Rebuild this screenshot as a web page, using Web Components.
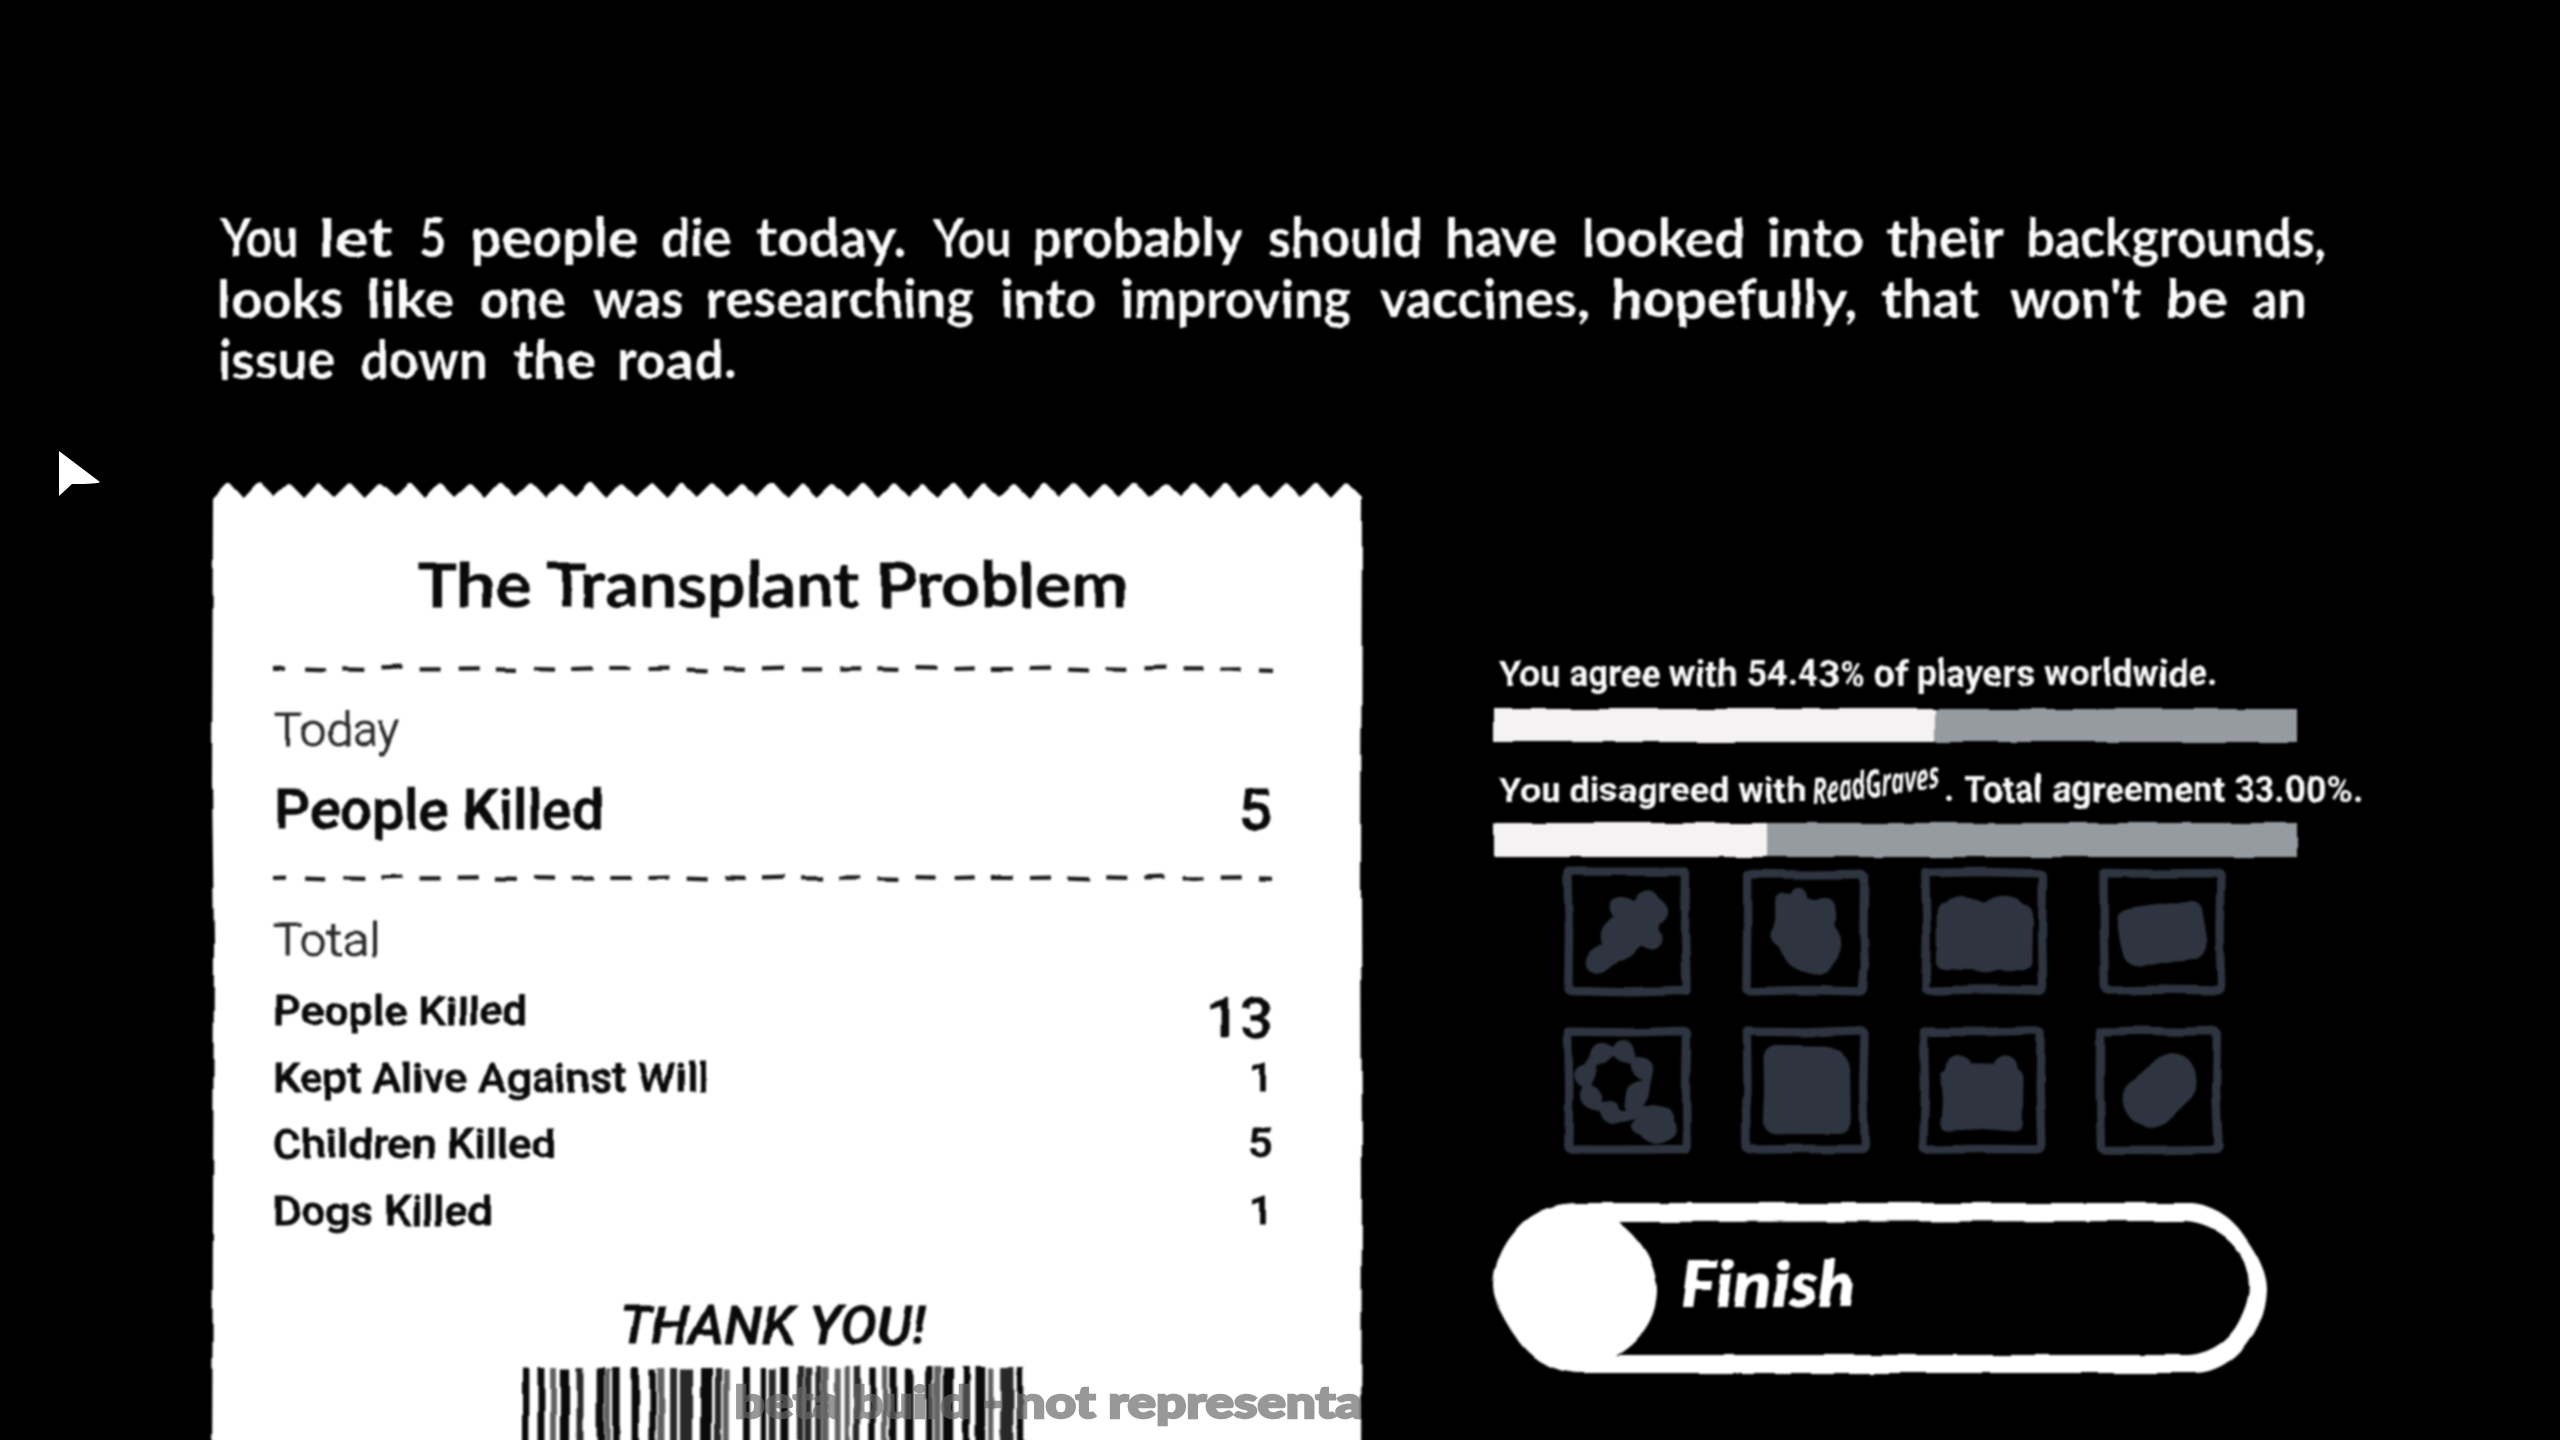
<!DOCTYPE html>
<html lang="en">
<head>
<meta charset="utf-8">
<title>The Transplant Problem</title>
<style>
html,body{margin:0;background:#000;width:2560px;height:1440px;overflow:hidden}
</style>
</head>
<body>
<game-stage></game-stage>
<script>
const WOBBLE = `<svg width="0" height="0" style="position:absolute"><filter id="wob" x="-2%" y="-5%" width="104%" height="110%" color-interpolation-filters="sRGB">
<feTurbulence type="fractalNoise" baseFrequency="0.03" numOctaves="1" seed="7" result="n"/>
<feColorMatrix in="n" type="matrix" values="1 0 0 0 0  0 1 0 0 0  0 0 1 0 0  0 0 0 0 1" result="m"/>
<feDisplacementMap in="SourceGraphic" in2="m" scale="5" xChannelSelector="R" yChannelSelector="G"/><feGaussianBlur stdDeviation="0.8"/></filter></svg>`;

/* One line of text whose ink spans exactly `w` pixels.
   `spans` optionally gives each word its own ink start and end, as "start-end start-end ...". */
class InkLine extends HTMLElement {
  connectedCallback() {
    const g = (n, d) => this.getAttribute(n) ?? d;
    const w = +g('w'), h = +g('h'), b = +g('b'), size = +g('size');
    const family = g('font', 'Roboto'), weight = g('weight', '500'), style = g('slant', 'normal');
    const text = this.textContent.trim();
    const ctx = document.createElement('canvas').getContext('2d');
    ctx.font = `${style} ${weight} ${size}px "${family}", sans-serif`;
    const m = ctx.measureText(text);
    const s = w / (m.actualBoundingBoxLeft + m.actualBoundingBoxRight);
    let body = `<text transform="translate(${m.actualBoundingBoxLeft * s} ${b}) scale(${s} 1)">${text}</text>`;
    if (this.hasAttribute('spans')) {
      const ext = g('spans').split(' ').map(t => t.split('-').map(Number));
      body = `<text y="${b}">` + text.split(' ').map((word, i) => {
        const q = ctx.measureText(word), [a, e] = ext[i];
        const k = (e - a) / (q.actualBoundingBoxLeft + q.actualBoundingBoxRight);
        return `<tspan x="${a + q.actualBoundingBoxLeft * k}" textLength="${q.width * k}" lengthAdjust="spacingAndGlyphs">${word}</tspan>`;
      }).join(' ') + '</text>';
    }
    const st = +g('stroke', 0);
    this.attachShadow({mode: 'open'}).innerHTML = `<style>
      :host{display:block;flex:none;width:${w}px;height:${h}px}
      svg{display:block;overflow:visible}
      text{font:${style} ${weight} ${size}px "${family}",sans-serif;fill:currentColor;stroke:currentColor;stroke-width:${st}px}
      </style><svg width="${w}" height="${h}">${body}</svg>`;
  }
}
customElements.define('ink-line', InkLine);

class DashRule extends HTMLElement {
  connectedCallback() {
    let d = '';
    for (let i = 0; i < 27; i++) {
      const x = i === 0 ? 0 : i * 38.15 - 6, l = i === 0 || i === 26 ? 13 : 21;
      const y = 10 + [0, -.6, .3, 0, -.7, -.4, 0, .7, .3, -.8][i * 7 % 10];
      d += `M${i === 26 ? 986 : x} ${y}l${l} ${[-.3, .5, 0, .6, -.7][i * 3 % 5]}`;
    }
    this.attachShadow({mode: 'open'}).innerHTML = `<style>:host{display:block;height:20px}svg{display:block}</style>
      <svg width="1000" height="20"><path d="${d}" stroke="#1c1c1c" stroke-width="4.2" fill="none"/></svg>`;
  }
}
customElements.define('dash-rule', DashRule);

class BarCode extends HTMLElement {
  connectedCallback() {
    const bars = '40-50 67-78 89-98g 106-121 135-146d 170-182 184-192g 197-209 231-243 262-272 276-287g 298-309d 315-337d 352-370 376-386d 390-399g 425-436 456-464 470-481d 490-503 519-529d 532-543d 551-560d 562-573g 585-594g 602-610g 618-628d 645-655 667-675g 680-691 707-721 744-754 758-768g 773-790 808-819 830-846 852-860g 873-895d 902-912'.split(' ');
    const c = {g: '#606060', d: '#282828'};
    this.attachShadow({mode: 'open'}).innerHTML = `<style>:host{display:block;width:504px;height:90px}svg{display:block}</style><svg width="504" height="90">${bars.map((t, i) => {
      const [a, e] = t.split('-').map(parseFloat), x = (a - 40) / 1.742, w = (e - a) / 1.742 + .6;
      return `<rect x="${x}" y="${i % 3 ? 0 : 1.5}" width="${w}" height="90" fill="${c[t.at(-1)] || '#0a0a0a'}"/>`;
    }).join('')}</svg>`;
  }
}
customElements.define('bar-code', BarCode);

class StatRow extends HTMLElement {
  constructor() {
    super();
    this.attachShadow({mode: 'open'}).innerHTML = `<style>:host{display:flex;justify-content:space-between;align-items:flex-start}</style><slot></slot><slot name="value"></slot>`;
  }
}
customElements.define('stat-row', StatRow);

class ReceiptPaper extends HTMLElement {
  connectedCallback() {
    const pts = ['1px 15px'];
    for (let i = 0; i < 38; i++) {
      const p = 16.7 + i * 30.2;
      pts.push(`${p - 1.5}px ${i % 3 * .6}px`, `${p + 1.5}px ${i % 3 * .6}px`);
      if (i < 37) pts.push(`${p + 15.1}px ${15 - i % 2}px`);
    }
    pts.push('1150px 15px', '1149px 400px', '1150px 700px', '1149px 1000px', '0px 1000px', '2px 460px', '0px 300px');
    this.attachShadow({mode: 'open'}).innerHTML = `<style>
      :host{display:block;width:1151px;flex:none;filter:url(#wob)}
      .paper{box-sizing:border-box;height:1000px;background:#fff;color:#0a0a0a;padding:60px 90px 0 61px;display:flex;flex-direction:column;clip-path:polygon(${pts.join(',')})}
      .title{margin-left:144px}
      .rows{margin-top:14px}
      </style>${WOBBLE}<div class="paper">
      <ink-line class="title" font="Lato" weight="600" stroke="1.1" size="61" w="709" h="90" b="64">The Transplant Problem</ink-line>
      <dash-rule style="margin-top:26px"></dash-rule>
      <ink-line style="margin:21px 0 0 2px;color:#2c2c2c" weight="300" stroke="1.1" size="46" w="125" h="56" b="46">Today</ink-line>
      <stat-row style="margin:20px 3px 0 4px"><ink-line stroke=".8" size="55" w="324" h="66" b="53">People Killed</ink-line><ink-line slot="value" stroke=".8" size="55" w="28" h="66" b="53">5</ink-line></stat-row>
      <dash-rule style="margin-top:26px"></dash-rule>
      <ink-line style="margin:22px 0 0 1px;color:#2c2c2c" weight="300" stroke="1.1" size="46" w="103" h="56" b="46">Total</ink-line>
      <div class="rows">
      <stat-row style="margin:0 3px 0 2px"><ink-line stroke=".8" size="41" w="250" h="67" b="45">People Killed</ink-line><ink-line slot="value" size="56" stroke=".5" w="60" h="67" b="58">13</ink-line></stat-row>
      <stat-row style="margin:0 7px 0 2px"><ink-line stroke=".8" size="41" w="431" h="67" b="45">Kept Alive Against Will</ink-line><ink-line slot="value" stroke=".8" size="41" w="13" h="67" b="44">1</ink-line></stat-row>
      <stat-row style="margin:0 2px"><ink-line stroke=".8" size="41" w="279" h="67" b="44">Children Killed</ink-line><ink-line slot="value" stroke=".8" size="41" w="21" h="67" b="43">5</ink-line></stat-row>
      <stat-row style="margin:0 7px 0 2px"><ink-line stroke=".8" size="41" w="215" h="67" b="44">Dogs Killed</ink-line><ink-line slot="value" stroke=".8" size="41" w="13" h="67" b="44">1</ink-line></stat-row>
      </div>
      <ink-line style="margin:42px 0 0 350px" slant="italic" stroke=".8" size="53" w="303" h="60" b="54">THANK YOU!</ink-line>
      <bar-code style="margin:17px 0 0 249px"></bar-code>
      </div>`;
  }
}
customElements.define('receipt-paper', ReceiptPaper);

class AgreeBar extends HTMLElement {
  connectedCallback() {
    this.attachShadow({mode: 'open'}).innerHTML = `<style>:host{display:block;width:804px;background:#969ba2}
      div{height:100%;width:${this.getAttribute('fill')}px;background:#f4f2f3}</style><div></div>`;
  }
}
customElements.define('agree-bar', AgreeBar);

const ICONS = [
  ['70 39', 'M83 55Q83 50 90 50L435 50Q440 52 439 60L436 230L441 405Q440 410 430 408L270 412L95 408Q85 408 86 395L88 230Z',
   'M281 138Q300 106 325 106Q345 108 352 122L378 152Q388 165 384 180Q380 195 359 208L356 222Q369 240 365 260Q355 284 330 284Q312 284 302 273L275 300Q255 318 238 318L205 344Q188 358 168 356Q138 350 138 324Q140 300 158 286L184 270Q176 240 184 222Q194 200 222 185Q206 165 211 148Q220 126 243 126Q266 127 281 138Z'],
  ['605.5 39', 'M621 57L800 59L960 57Q973 57 972 68L970 230L974 330L968 402Q965 410 955 409L800 405L632 409Q618 408 619 396L621 230Z',
   'M705 145Q703 115 735 115L752 117Q758 98 775 98Q796 99 802 130Q818 137 830 134Q845 126 865 130Q886 138 886 165L883 210Q908 240 902 280L892 310L862 352Q845 368 825 360Q775 350 750 330Q730 312 722 280Q692 262 694 240L705 200Z'],
  ['91 39', 'M107 54L280 51L450 55Q460 56 460 66L457 230L460 395Q459 410 447 407L280 403L120 407Q107 406 107 394L111 260Z',
   'M141 168Q141 148 170 145Q190 122 220 123Q255 125 285 143Q310 122 343 122Q380 124 397 146Q431 152 430 185L428 325Q424 344 400 346L320 345Q300 356 280 355Q262 354 250 346L160 342Q136 338 135 315L141 280Z'],
  ['626.5 39', 'M640 54L780 56L985 54Q992 55 991 64L988 230L993 395Q991 407 980 406L800 404L655 407Q643 406 644 394L641 230Z',
   'M681 195Q683 168 715 162L895 137Q932 135 937 168L952 265Q953 300 920 311L850 317L760 334Q718 338 702 308Q688 270 681 195Z'],
  ['70 516', 'M85 530L270 532L432 528Q443 529 442 540L439 700L441 872Q440 884 430 882L270 884L98 884Q85 883 86 870L89 700Z',
   'M153 600Q160 564 190 563Q208 564 220 577Q230 556 255 555Q280 558 287 603Q310 602 325 610Q342 622 340 645Q336 665 331 690Q330 720 320 738L310 753L348 754L385 762Q402 768 400 800Q414 820 405 840Q380 865 345 867Q310 860 298 838Q270 828 274 806L288 790L248 798Q235 808 218 807Q190 800 183 768Q125 760 120 720L128 697Q102 680 104 655Q108 630 135 625ZM218 603Q206 630 170 630Q168 660 152 690Q185 703 188 741L215 738Q235 742 245 765L262 765Q250 740 263 700Q275 682 310 676Q275 665 272 625Q240 625 222 603Z'],
  ['605.5 516', 'M620 530L800 532L960 526Q973 528 973 540L969 700L974 870Q973 884 960 882L800 882L632 884Q618 882 619 870L618 760L622 700Z',
   'M670 610Q672 572 710 570L860 572Q895 576 910 600Q932 620 930 660L932 790Q931 834 895 837L830 837L700 838Q670 832 668 800L672 700Z'],
  ['91 516', 'M103 530L270 531L440 526Q454 527 453 540L450 700L455 868Q453 884 440 883L280 882L115 884Q100 882 101 868L106 700Z',
   'M166 645Q170 602 205 600Q230 602 247 625L312 626Q322 603 350 601Q380 604 385 640Q403 650 401 670L399 810Q396 830 375 829L280 822L175 827Q152 826 152 805L157 740L152 655Z'],
  ['626.5 516', 'M630 530L740 527L860 530L970 528Q981 530 980 540L978 700L985 870Q984 884 972 882L800 885L645 884Q631 882 632 870L629 700Z',
   'M800 611Q825 594 850 595Q885 597 904 625Q924 655 917 705L905 727L828 802Q800 824 765 816Q725 804 706 768Q690 735 703 702Q712 685 740 665Z']
];
class EvidenceIcon extends HTMLElement {
  connectedCallback() {
    const [o, frame, shape] = ICONS[+this.getAttribute('kind')];
    this.attachShadow({mode: 'open'}).innerHTML = `<style>:host{display:block;width:128px;height:128px}svg{display:block;overflow:visible}</style>
      <svg width="128" height="128" viewBox="${o} 384 384"><path d="${frame}" fill="none" stroke="#2f3540" stroke-width="25" stroke-linejoin="round"/><path d="${shape}" fill="#2f3540" fill-rule="evenodd"/></svg>`;
  }
}
customElements.define('evidence-icon', EvidenceIcon);

class FinishButton extends HTMLElement {
  connectedCallback() {
    this.attachShadow({mode: 'open'}).innerHTML = `<style>
      :host{display:grid;width:775px;height:171px;color:#fff}
      :host>*{grid-area:1/1}
      svg{display:block}
      .label{margin:40px 0 0 189px}
      </style><svg width="775" height="171"><path fill="#fff" fill-rule="evenodd" d="M86 0H700C722 2 742 16 753 34C766 52 775 70 775 86C774 110 766 126 754 142C741 158 723 170 702 170H86C58 169 36 154 23 133C7 110 1 92 1 82C3 52 17 32 32 18C48 5 68 0 86 0ZM126 19C151 38 165 63 165 88C164 114 150 136 124 152H697C721 150 740 135 749 114C761 90 758 70 748 50C738 34 717 20 694 18Z"/></svg>
      <div class="label"><ink-line font="Lato" weight="800" slant="italic" size="64" w="172" h="80" b="64">Finish</ink-line></div>`;
  }
}
customElements.define('finish-button', FinishButton);

class VerdictPanel extends HTMLElement {
  connectedCallback() {
    this.attachShadow({mode: 'open'}).innerHTML = `<style>
      :host{display:block;padding-top:244px;width:900px;color:#fafafa;filter:url(#wob)}
      .split{display:flex;height:40px;margin:20px 0 0 7px}
      .name{width:141px;display:block}
      .name ink-line{margin-left:7px;transform-origin:0 40px;transform:rotate(-8deg) skewX(-4deg)}
      .grid{display:grid;grid-template-columns:repeat(4,128px);column-gap:50.5px;row-gap:31px;margin:11px 0 48px 71.3px}
      </style>${WOBBLE}
      <ink-line style="margin-left:7px" weight="700" size="36" w="717" h="50" b="46">You agree with 54.43% of players worldwide.</ink-line>
      <agree-bar fill="442" style="height:33px;margin:19px 0 0 1px"></agree-bar>
      <div class="split"><ink-line weight="700" size="36" w="306.5" h="40" b="40">You disagreed with</ink-line><div class="name"><ink-line font="Open Sans" weight="700" slant="italic" size="37" w="128" h="40" b="43">ReadGraves</ink-line></div><ink-line weight="700" size="36" w="415" h="40" b="40">. Total agreement 33.00%.</ink-line></div>
      <agree-bar fill="274" style="height:34px;margin:21px 0 0 1px"></agree-bar>
      <div class="grid">${ICONS.map((_, i) => `<evidence-icon kind="${i}"></evidence-icon>`).join('')}</div>
      <finish-button></finish-button>`;
  }
}
customElements.define('verdict-panel', VerdictPanel);

class GameStage extends HTMLElement {
  connectedCallback() {
    this.attachShadow({mode: 'open'}).innerHTML = `<style>
      :host{display:block;position:relative;box-sizing:border-box;width:2560px;height:1440px;overflow:hidden;background:#000;padding:213px 0 0 212px}
      .intro{color:#fbfbfb;padding-left:8px;filter:url(#wob)}
      .main{display:flex;align-items:flex-start;gap:129px}
      receipt-paper{margin-top:87px}
      .cursor{position:absolute;left:58px;top:450px;display:block}
      .mark{position:absolute;left:737px;top:1384px;width:625px;color:#686868;opacity:.675}
      </style>${WOBBLE}
      <div class="intro">
        <ink-line font="Lato" weight="700" size="53" w="2105" h="61" b="44" spans="0-76 103-172 201-224 254-416 442-510 537-685 713-789 815-1022 1049-1199 1228-1336 1365-1522 1549-1642 1667-1782 1809-2105">You let 5 people die today. You probably should have looked into their backgrounds,</ink-line>
        <ink-line font="Lato" weight="700" size="53" w="2085" h="61" b="44" spans="1-122 150-234 260-345 373-462 489-754 782-875 902-1131 1159-1368 1394-1636 1662-1760 1789-1921 1949-2006 2033-2083">looks like one was researching into improving vaccines, hopefully, that won't be an</ink-line>
        <ink-line font="Lato" weight="700" size="53" w="515" h="61" b="44" spans="1-113 141-265 293-374 400-515">issue down the road.</ink-line>
      </div>
      <div class="main"><receipt-paper></receipt-paper><verdict-panel></verdict-panel></div>
      <svg class="cursor" width="43" height="48"><path d="M1 1L42 32Q40 34 14 34L1 46Z" fill="#fff"/></svg>
      <div class="mark"><ink-line font="Lato" weight="900" size="44" stroke="2.4" w="624" h="46" b="33.5">beta build - not representa</ink-line></div>`;
  }
}
customElements.define('game-stage', GameStage);
</script>
</body>
</html>
